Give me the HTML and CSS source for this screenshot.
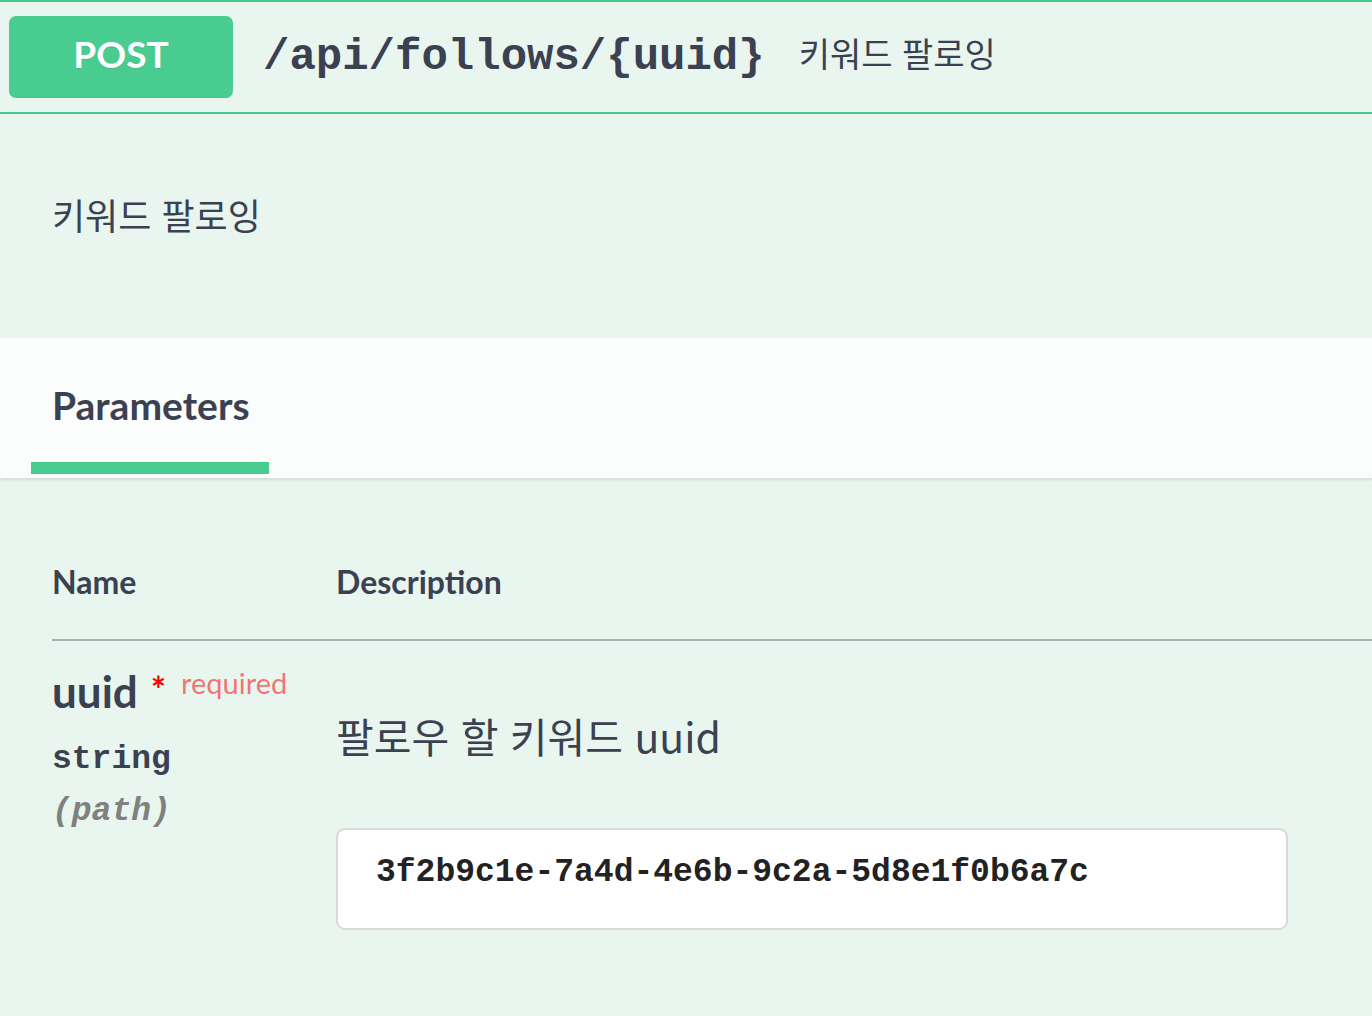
FILE: index.html
```html
<!DOCTYPE html>
<html lang="ko">
<head>
<meta charset="utf-8">
<title>POST /api/follows/{uuid}</title>
<link rel="stylesheet" href="styles.css">
</head>
<body>
<div class="opblock">
  <div class="summary">
    <span class="method">POST</span>
    <span class="path">/api/follows/{uuid}</span>
    <span class="summary-desc">키워드 팔로잉</span>
  </div>
  <div class="description">키워드 팔로잉</div>
  <div class="section-header">
    <div class="tab">Parameters</div>
  </div>
  <div class="params">
    <div class="params-head">
      <div class="col-name">Name</div>
      <div class="col-desc">Description</div>
    </div>
    <div class="param-row">
      <div class="col-name">
        <div class="param-name">uuid<span class="star">*</span><span class="required">required</span></div>
        <div class="param-type">string</div>
        <div class="param-in">(path)</div>
      </div>
      <div class="col-desc">
        <div class="param-desc">팔로우 할 키워드 uuid</div>
        <div class="input">3f2b9c1e-7a4d-4e6b-9c2a-5d8e1f0b6a7c</div>
      </div>
    </div>
  </div>
</div>
</body>
</html>
```
FILE: styles.css
```css
html, body {
  margin: 0;
  padding: 0;
  background: #e8f6ef;
}
body {
  font-family: "Lato", "Noto Sans CJK KR", sans-serif;
  color: #3b4151;
  width: 1372px;
  height: 1016px;
  overflow: hidden;
}
.opblock {
  background: #e8f6ef;
  border-top: 2px solid #49cc90;
}
.summary {
  display: flex;
  align-items: center;
  height: 110px;
  border-bottom: 2px solid #49cc90;
  padding-left: 9px;
}
.method {
  display: flex;
  align-items: center;
  justify-content: center;
  width: 224px;
  height: 82px;
  box-sizing: border-box;
  padding-bottom: 8px;
  background: #49cc90;
  border-radius: 7px;
  color: #fff;
  font-family: "Lato", sans-serif;
  font-weight: 700;
  font-size: 37px;
  text-shadow: 0 1px 0 rgba(0,0,0,.1);
}
.path {
  margin-left: 30px;
  font-family: "Liberation Mono", monospace;
  font-weight: 700;
  font-size: 44px;
  color: #3b4151;
}
.summary-desc {
  margin-left: 34px;
  margin-top: -10px;
  font-family: "Noto Sans CJK KR", sans-serif;
  font-size: 34px;
  color: #3b4151;
}
.description {
  height: 224px;
  box-sizing: border-box;
  padding: 72px 0 0 52px;
  font-family: "Noto Sans CJK KR", sans-serif;
  font-size: 36px;
  line-height: 56px;
}
.section-header {
  height: 140px;
  box-sizing: border-box;
  background: rgba(255,255,255,.8);
  box-shadow: 0 2px 3px rgba(0,0,0,.1);
  display: flex;
  align-items: flex-end;
  padding-left: 31px;
}
.tab {
  width: 238px;
  box-sizing: border-box;
  padding: 0 0 34px 21px;
  border-bottom: 12px solid #49cc90;
  font-weight: 700;
  font-size: 39px;
  line-height: 46px;
  margin-bottom: 4px;
}
.params {
  padding: 86px 0 0 52px;
}
.params-head {
  display: flex;
  border-bottom: 2px solid #a7b1b4;
  padding-bottom: 39px;
  font-weight: 700;
  font-size: 32px;
  line-height: 36px;
}
.col-name {
  width: 284px;
  flex: none;
}
.col-desc {
  flex: 1;
}
.param-row {
  display: flex;
  padding-top: 20px;
}
.param-name {
  font-size: 44px;
  font-weight: 700;
  line-height: 60px;
}
.star {
  color: red;
  font-size: 36px;
  vertical-align: top;
  margin-left: 13px;
  position: relative;
  top: -2px;
}
.required {
  color: rgba(255,0,0,.55);
  font-size: 29px;
  font-weight: 400;
  vertical-align: top;
  margin-left: 15px;
  position: relative;
  top: -8px;
}
.param-type {
  font-family: "Liberation Mono", monospace;
  font-weight: 700;
  font-size: 33px;
  line-height: 46px;
  margin-top: 16px;
}
.param-in {
  font-family: "Liberation Mono", monospace;
  font-weight: 700;
  font-style: italic;
  font-size: 33px;
  line-height: 46px;
  color: #808080;
  margin-top: 6px;
}
.param-desc {
  font-family: "Noto Sans CJK KR", sans-serif;
  font-size: 41px;
  line-height: 60px;
  margin-top: 44px;
}
.input {
  margin-top: 63px;
  width: 952px;
  height: 102px;
  box-sizing: border-box;
  background: #fff;
  border: 2px solid #d9d9d9;
  border-radius: 9px;
  padding: 24px 0 0 38px;
  font-family: "Liberation Mono", monospace;
  font-weight: 700;
  font-size: 33px;
  color: #222;
}
```
